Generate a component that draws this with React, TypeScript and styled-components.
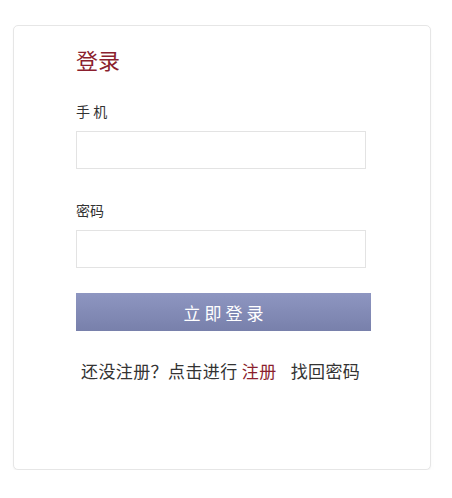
import React from "react";
import styled, { createGlobalStyle } from "styled-components";

const Global = createGlobalStyle`
  html, body { margin: 0; padding: 0; background: #fff; }
  body { font-family: "Noto Sans CJK SC", "Noto Sans", sans-serif; color: #333; }
  * { box-sizing: border-box; }
`;

const Page = styled.div`
  padding: 25px 0 0 13px;
`;

const Card = styled.div`
  width: 418px;
  height: 445px;
  border: 1px solid #e6e6e6;
  border-radius: 5px;
  background: #fff;
  box-shadow: 0 1px 2px rgba(0, 0, 0, 0.04), 0 16px 12px -6px rgba(0, 0, 0, 0.05);
  padding: 17px 0 0 62px;
  display: flex;
  flex-direction: column;
`;

const Title = styled.h1`
  margin: 0;
  font-size: 22px;
  font-weight: normal;
  line-height: 32px;
  color: #8b1f2e;
`;

const Field = styled.div<{ $top: number }>`
  margin-top: ${(p) => p.$top}px;
  display: flex;
  flex-direction: column;
`;

const Label = styled.label`
  font-size: 14px;
  line-height: 20px;
  color: #333;
`;

const Input = styled.input`
  margin-top: 10px;
  width: 290px;
  height: 38px;
  border: 1px solid #e3e3e3;
  outline: none;
  padding: 0 8px;
  font-size: 14px;
`;

const Button = styled.button`
  margin-top: 25px;
  width: 295px;
  height: 38px;
  border: none;
  background: linear-gradient(#8e96c1, #7880ab);
  color: #fff;
  font-family: "Noto Sans CJK SC", sans-serif;
  font-size: 17px;
  letter-spacing: 4px;
  text-indent: 4px;
  padding: 0;
  cursor: pointer;
`;

const Links = styled.div`
  margin-top: 28px;
  padding-left: 5px;
  font-size: 17px;
  letter-spacing: 0.4px;
  line-height: 24px;
  color: #333;
  white-space: pre;
`;

const Red = styled.a`
  color: #8b1f2e;
  text-decoration: none;
`;

const Plain = styled.a`
  color: #333;
  text-decoration: none;
  margin-left: 14px;
`;

export default function App() {
  return (
    <>
      <Global />
      <Page>
        <Card>
          <Title>登录</Title>
          <Field $top={26}>
            <Label>手 机</Label>
            <Input />
          </Field>
          <Field $top={31}>
            <Label>密码</Label>
            <Input type="password" />
          </Field>
          <Button>立即登录</Button>
          <Links>
            还没注册？点击进行 <Red href="#">注册</Red><Plain href="#">找回密码</Plain>
          </Links>
        </Card>
      </Page>
    </>
  );
}
